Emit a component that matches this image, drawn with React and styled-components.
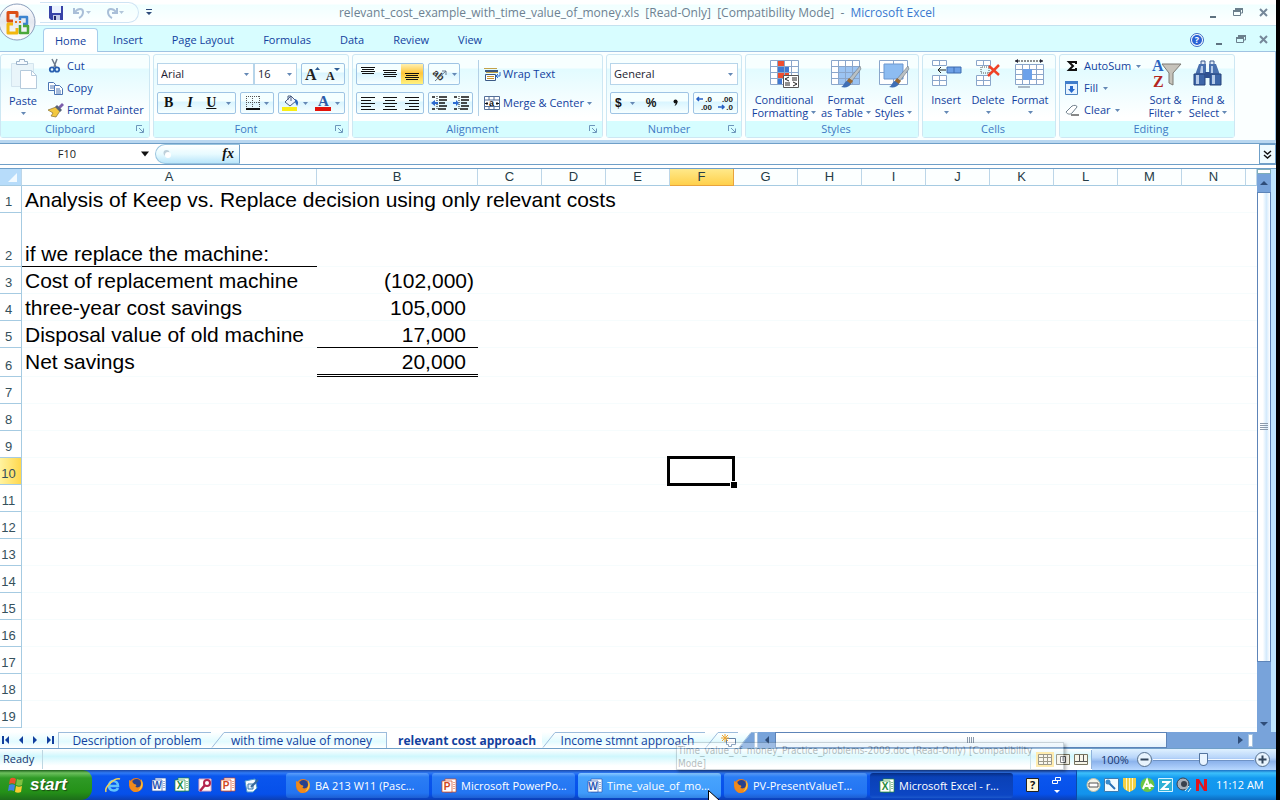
import styled, { createGlobalStyle, css } from 'styled-components';

const GlobalStyle = createGlobalStyle`
  * { box-sizing: border-box; }
  body {
    margin: 0;
    background: #000;
    overflow: hidden;
  }
  button, input, select {
    margin: 0;
    padding: 0;
    border: 0;
    background: none;
    font: inherit;
    color: inherit;
    outline: none;
  }
  svg { display: block; flex: none; overflow: visible; }
`;

const ink = '#123f9e';
const line = '#6f9fc8';

const Window = styled.div`
  display: flex;
  flex-direction: column;
  height: 100vh;
  margin-right: 4px;
  background: #fff;
  color: ${ink};
  font: 11px/14px 'Open Sans', 'Noto Sans', sans-serif;
  position: relative;
`;

/* ---------- title bar and tabs ---------- */

const TitleBar = styled.header`
  display: flex;
  align-items: center;
  height: 26px;
  padding-left: 40px;
  border-bottom: 1px solid #c4e2ef;
  background: linear-gradient(#fff 0 4px, #f0ffff 5px, #fff);
`;

const QuickAccess = styled.div`
  display: flex;
  align-items: center;
  gap: 4px;
  width: 99px;
  height: 21px;
  padding-left: 8px;
  border: 1px solid #cfe4f4;
  border-left: 0;
  border-radius: 0 11px 11px 0;
`;

const IconButton = styled.button`
  display: flex;
  align-items: center;
  justify-content: center;
  width: ${(props) => props.$width || 16}px;
  height: ${(props) => props.$height || 16}px;
`;

const Title = styled.h1`
  flex: 1;
  margin: 0;
  padding-right: 90px;
  text-align: center;
  font-size: 12px;
  font-weight: normal;
  line-height: 26px;
  white-space: pre;
  color: #6d8191;

  span { color: #3a78cf; }
`;

const WindowButtons = styled.div`
  display: flex;
  align-items: center;
  gap: ${(props) => props.$gap}px;
  padding-right: 5px;
`;

const OfficeButton = styled.button`
  position: absolute;
  left: -2px;
  top: 3px;
  z-index: 2;
`;

const TabBar = styled.nav`
  display: flex;
  align-items: stretch;
  gap: 1px;
  height: 26px;
  padding: 2px 0 0 43px;
  background: #d8fdff;
  border-bottom: 1px solid #9fc3e2;
`;

const Tab = styled.button`
  padding: 0 14px;
  margin-bottom: -1px;
  border-radius: 4px 4px 0 0;
  ${(props) =>
    props.$active &&
    css`
      padding: 0 11px;
      border: 1px solid #a6cdec;
      border-bottom: 0;
      background: #fff;
    `}
`;

const Spacer = styled.div`
  flex: 1;
`;

/* ---------- ribbon ---------- */

const Ribbon = styled.section`
  display: flex;
  gap: 3px;
  height: 91px;
  padding: 2px 0 2px;
  background: #fbffff;
  border-bottom: 3px solid #b9d7f0;
  border-right: 1px solid #9fc3e2;
`;

const Group = styled.div`
  display: flex;
  flex-direction: column;
  width: ${(props) => props.$width}px;
  border: 1px solid #cde7f3;
  border-radius: 3px;
  background: linear-gradient(#f7ffff 0 13px, #e2fbff 14px, #fff 62px);
`;

const GroupBody = styled.div`
  flex: 1;
  min-height: 0;
  display: flex;
  padding: 0 ${(props) => props.$pad || 3}px;
  gap: ${(props) => props.$gap || 0}px;
`;

const GroupLabel = styled.div`
  display: flex;
  flex: none;
  align-items: center;
  height: 16px;
  padding: 0 4px;
  background: #d6fdff;
  color: #3f79c4;

  span { flex: 1; text-align: center; padding-left: ${(props) => (props.$launcher ? 0 : 8)}px; }
`;

const Stack = styled.div`
  display: flex;
  flex-direction: column;
  gap: ${(props) => props.$gap || 0}px;
  padding-top: ${(props) => props.$top || 0}px;
`;

const ButtonRow = styled.div`
  display: flex;
  gap: ${(props) => props.$gap ?? 4}px;
`;

const ToolSet = styled.div`
  display: flex;
  align-items: center;
  justify-content: space-around;
  width: ${(props) => props.$width}px;
  height: 22px;
  border: 1px solid #9fc4e4;
  border-radius: 2px;
  background: linear-gradient(#f5ffff 0 8px, #d9f5ff 9px, #f7ffff);
`;

const Tool = styled.button`
  display: flex;
  align-items: center;
  justify-content: center;
  gap: 4px;
  flex: ${(props) => (props.$fit ? '0 0 auto' : '1')};
  height: 20px;
  padding: ${(props) => (props.$fit ? '0 4px' : '0')};
  color: #111;
  font: ${(props) => props.$font || "bold 14px/18px 'Liberation Serif', serif"};
  text-decoration: ${(props) => (props.$underline ? 'underline' : 'none')};
  ${(props) => props.$active && css`background: linear-gradient(#fff0b0, #ffc63a 45%, #fff27e);`}
`;

const Picker = styled.label`
  display: flex;
  align-items: center;
  width: ${(props) => props.$width}px;
  height: 22px;
  padding-right: 4px;
  border: 1px solid #b7d5ea;
  background: #fff;
  color: #1c1c30;
`;

const Select = styled.select`
  flex: 1;
  min-width: 0;
  height: 20px;
  padding-left: 3px;
  appearance: none;
`;

const SmallButton = styled.button`
  display: flex;
  align-items: center;
  gap: ${(props) => props.$gap || 3}px;
  height: 22px;
  white-space: nowrap;
`;

const BigButton = styled.button`
  display: flex;
  flex-direction: column;
  align-items: center;
  width: ${(props) => props.$width}px;
  padding-top: 4px;
  line-height: 13px;
  white-space: nowrap;

  svg + span { margin-top: 4px; }
`;

const LastLine = styled.span`
  display: flex;
  align-items: center;
  justify-content: center;
  gap: 3px;
  height: 13px;
`;

const Divider = styled.div`
  width: 1px;
  height: 56px;
  margin-top: 5px;
  background: #b3d0e6;
`;

/* ---------- formula bar ---------- */

const FormulaBar = styled.div`
  display: flex;
  height: 22px;
  border-top: 1px solid ${line};
  border-bottom: 1px solid ${line};
  color: #222;
`;

const NameBox = styled.label`
  display: flex;
  align-items: center;
  width: 155px;
  padding-right: 6px;

  input {
    flex: 1;
    min-width: 0;
    padding-right: 7px;
    text-align: center;
  }
`;

const FunctionArea = styled.div`
  display: flex;
  align-items: center;
  justify-content: space-between;
  width: 85px;
  padding: 0 1px 0 7px;
  border: 1px solid #9ac5df;
  border-right-color: ${line};
  border-radius: 10px 0 0 10px;
  background: linear-gradient(#fff, #e8fbff 50%, #b9e5fa);
`;

const FormulaInput = styled.input`
  flex: 1;
  min-width: 0;
`;

const ExpandButton = styled(IconButton)`
  height: auto;
  border: 1px solid ${line};
  background: #effbff;
`;

/* ---------- worksheet ---------- */

const Workspace = styled.main`
  display: flex;
  flex: 1;
  min-height: 0;
  margin-top: 3px;
  border-top: 1px solid ${line};
`;

const SheetArea = styled.div`
  flex: 1;
  min-width: 0;
  overflow: hidden;
`;

const Sheet = styled.table`
  width: 100%;
  table-layout: fixed;
  border-collapse: separate;
  border-spacing: 0;
  font-family: 'Liberation Sans', Arial, sans-serif;
  color: #000;
`;

const ColumnHead = styled.th`
  height: 17px;
  padding: 0;
  border-right: 1px solid #bcd6e8;
  border-bottom: 1px solid #a6cbe2;
  font-size: 13px;
  font-weight: normal;
  line-height: 16px;
  color: #263c46;
  background: #fcffff;
  ${(props) =>
    props.$active &&
    css`
      border-right-color: #e8a33d;
      border-bottom-color: #e8a33d;
      background: linear-gradient(#ffe98a, #ffd04b);
    `}
`;

const Corner = styled(ColumnHead)`
  background: #b7dcfa;

  svg { margin-left: auto; margin-right: 4px; }
`;

const RowHead = styled.th`
  padding: 0 4px 0 0;
  border-right: 1px solid #a6cbe2;
  border-bottom: 1px solid #a6cbe2;
  vertical-align: bottom;
  text-align: center;
  font-size: 13px;
  font-weight: normal;
  line-height: 20px;
  color: #35505c;
  ${(props) => props.$active && css`background: linear-gradient(90deg, #fff3a0, #ffd84e);`}
`;

const Cell = styled.td`
  position: relative;
  height: ${(props) => props.$height}px;
  padding: 0 ${(props) => (props.$negative ? 4 : 12)}px 0 3px;
  border-bottom: 1px solid #f6fcfd;
  vertical-align: bottom;
  text-align: ${(props) => (props.$number ? 'right' : 'left')};
  font-size: 21px;
  line-height: 24px;
  white-space: nowrap;
  ${(props) => props.$rule === 'single' && css`border-bottom: 1px solid #000;`}
  ${(props) => props.$rule === 'double' && css`border-bottom: 3px double #000;`}
  ${(props) => props.$rule === 'none' && css`padding-bottom: 2px;`}
`;

const Selection = styled.div`
  position: absolute;
  inset: -2px -1px -2px -3px;
  z-index: 1;
  border: 3px solid #000;

  &::after {
    content: '';
    position: absolute;
    right: -5px;
    bottom: -5px;
    width: 6px;
    height: 6px;
    border-top: 1px solid #fff;
    border-left: 1px solid #fff;
    background: #000;
  }
`;

const VScroll = styled.div`
  display: flex;
  flex-direction: column;
  align-items: stretch;
  width: 19px;
  padding-right: 5px;
  background: linear-gradient(90deg, #78a3da 14px, #bfe6ff 14px);
`;

const Splitter = styled.div`
  height: 5px;
  border: 1px solid #7faeb8;
  background: #fff;
`;

const VThumb = styled.div`
  display: flex;
  align-items: center;
  justify-content: center;
  flex: 1;
  border: 1px solid #5d84b8;
  background: linear-gradient(90deg, #fff 40%, #d4eafc 70%, #fff);
`;

const VTrack = styled.div`
  display: flex;
  align-items: flex-end;
  justify-content: center;
  height: 70px;
`;

/* ---------- sheet tabs ---------- */

const SheetBar = styled.div`
  display: flex;
  align-items: stretch;
  height: 17px;
  border-bottom: 1px solid ${line};
  background: linear-gradient(#fff, #e2fbff 60%, #fff);
  font-size: 12px;
`;

const SheetNav = styled.div`
  display: flex;
  align-items: center;
  width: 59px;
  border-right: 1px solid #a8c4dd;
`;

const SheetTab = styled.button`
  width: ${(props) => props.$width}px;
  padding-left: ${(props) => props.$before || 0}px;
  padding-right: ${(props) => props.$after || 0}px;
  border-top: 1px solid #9cbcdc;
  line-height: 15px;
  white-space: nowrap;
  ${(props) => props.$edge && css`border-right: 1px solid #9cbcdc;`}
  ${(props) =>
    props.$active &&
    css`
      border-top-color: #fff;
      background: #fff;
      font-weight: bold;
    `}
`;

const HScroll = styled.div`
  display: flex;
  align-items: center;
  flex: 1;
  padding-right: 5px;
  background: #78a3da;
`;

const HThumb = styled.div`
  display: flex;
  align-items: center;
  justify-content: center;
  align-self: stretch;
  flex: 1;
  margin-right: 71px;
  border: 1px solid #5d84b8;
  background: linear-gradient(#fff 30%, #e4f3fd);
`;

const Grip = styled.div`
  width: 5px;
  height: 13px;
  margin: 0 18px 0 5px;
  border: 1px solid #a6c3df;
  background: #fff;
`;

const TabGrip = styled(Grip)`
  height: 16px;
  width: 4px;
  margin: 0;
`;

/* ---------- status bar ---------- */

const StatusBar = styled.footer`
  display: flex;
  align-items: center;
  height: 21px;
  padding-left: 3px;
  background: linear-gradient(#fff, #cff7fd 35%, #fff 80%);
`;

const ReadyText = styled.span`
  width: 40px;
  height: 19px;
  line-height: 17px;
  color: #15366f;
  border-right: 1px solid #bdd7e2;
`;

const ViewButtons = styled.div`
  display: flex;
  align-items: center;
  width: 62px;
  border-left: 1px solid #bdd7e2;
  border-right: 1px solid #8fb2dc;
  height: 19px;
  padding-left: 5px;
`;

const ZoomArea = styled.div`
  display: flex;
  align-items: center;
  width: 184px;
  height: 21px;
  padding: 0 5px 0 9px;
  background: linear-gradient(#dff1ff, #b9d6fa 40%, #8cb3ec 60%, #b8d8ff);
  color: #15366f;
`;

const ZoomLabel = styled.span`
  width: 35px;
`;

const ZoomSlider = styled.input`
  flex: 1;
  min-width: 0;
  height: 15px;
  appearance: none;
  background: linear-gradient(transparent 7px, #f1f8ff 7px 8px, #6f93c6 8px 9px, transparent 9px);

  &::-webkit-slider-thumb {
    appearance: none;
    width: 9px;
    height: 13px;
    border: 1px solid #54759f;
    border-radius: 1px 1px 5px 5px;
    background: #e8f4ff;
  }
`;

/* ---------- taskbar ---------- */

const Taskbar = styled.div`
  display: flex;
  align-items: stretch;
  height: 30px;
  background: linear-gradient(#1a48a8 0, #2f7af5 3px, #0a56ee 6px, #0650ea 24px, #0c3fb4);
  color: #fff;
  font-size: 11px;
`;

const StartButton = styled.button`
  display: flex;
  align-items: center;
  gap: 5px;
  width: 92px;
  padding-left: 7px;
  border-radius: 0 9px 11px 0;
  background: linear-gradient(#1d5f1a 0, #6cc05d 3px, #2f9a26 8px, #249118 22px, #1d6d1a);
  font: italic bold 17px/24px 'Liberation Sans', Arial, sans-serif;
  text-shadow: 1px 1px 1px #1a4b12;
`;

const QuickLaunch = styled.div`
  display: flex;
  align-items: center;
  gap: 7px;
  width: 194px;
  padding-left: 13px;
`;

const Tasks = styled.div`
  display: flex;
  flex: 1;
  gap: 3px;
  padding: 3px 0 2px;
  min-width: 0;
`;

const Task = styled.button`
  position: relative;
  display: flex;
  align-items: center;
  gap: 4px;
  flex: 0 1 143px;
  min-width: 0;
  padding: 0 9px;
  border-radius: 3px;
  white-space: nowrap;
  background: linear-gradient(#5b9dfb, #2a7df5 4px, #2274f2 20px, #1d5ed2);
  ${(props) => props.$hover && css`background: linear-gradient(#8bc8ff, #47a3fd 4px, #3f9bfb 20px, #3384e4);`}
  ${(props) => props.$pressed && css`background: linear-gradient(#08308a, #0a41b6 4px, #0c46c4 22px, #1c58cb);`}
`;

const LanguageBar = styled.div`
  display: flex;
  align-items: center;
  gap: 12px;
  width: 52px;
  padding-left: 2px;
`;

const Tray = styled.div`
  display: flex;
  align-items: center;
  gap: 3px;
  width: 200px;
  padding-left: 9px;
  border-left: 1px solid #0b4aa8;
  background: linear-gradient(#1b6fc4 0, #3cc0fb 3px, #149af0 8px, #1393ec 24px, #0d6cc0);

  time { margin-left: 4px; white-space: nowrap; }
`;

const FadingTip = styled.div`
  position: absolute;
  left: 98px;
  bottom: 28px;
  z-index: 3;
  width: 388px;
  height: 28px;
  padding: 1px;
  border: 1px solid #62727d;
  box-shadow: 2px 2px 3px #000;
  background: #fff;
  color: #111;
  font: 10px/13px 'DejaVu Sans Condensed', 'DejaVu Sans', sans-serif;
  text-align: left;
  white-space: normal;
  opacity: 0.28;
`;

const Pointer = styled.div`
  position: absolute;
  left: 130px;
  top: 17px;
  z-index: 4;
`;

/* ---------- drawings ---------- */

const Arrow = ({ color = '#6488b5', size = 5 }) => (
  <svg width={size} height={size} viewBox="0 0 5 5">
    <path d="M0 1h5L2.5 4z" fill={color} />
  </svg>
);

const Launcher = () => (
  <svg width="8" height="8" viewBox="0 0 8 8" fill="none" stroke="#6d96bb">
    <path d="M.5 6V.5H6M3 3l4 4M7.500 3.500v4h-4" />
  </svg>
);

const OfficeLogo = () => (
  <svg width="38" height="38" viewBox="0 0 38 38">
    <defs>
      <linearGradient id="orb" x2="0" y2="1">
        <stop offset="0" stopColor="#fff" />
        <stop offset=".5" stopColor="#e4e8f0" />
        <stop offset="1" stopColor="#fff" />
      </linearGradient>
    </defs>
    <circle cx="19" cy="19" r="18" fill="url(#orb)" stroke="#8b9dbb" />
    <g fill="none" strokeWidth="3" strokeLinejoin="round">
      <path d="M15 18h-5V9.500h9v5" stroke="#dc4f17" />
      <path d="M22 17v-3h7v7h-4" stroke="#3c83cf" strokeWidth="2.500" />
      <path d="M15 21h-5v9h9v-5" stroke="#f2b70f" />
      <path d="M22 22v8h8v-7h-5" stroke="#4ba83a" strokeWidth="2.500" />
    </g>
    <path d="M17 18h2v2h-2zM21 18h2v2h-2z" fill="#e87422" />
  </svg>
);

const SaveIcon = () => (
  <svg width="14" height="14" viewBox="0 0 14 14">
    <path d="M0 0h14v14H2l-2-2z" fill="#3743a8" />
    <path d="M3 0h9v7H3z" fill="#e9f2ff" />
    <path d="M4 9h7v5H4z" fill="#c2cbe8" />
    <path d="M5 10h2v4H5z" fill="#22276b" />
  </svg>
);

const UndoIcon = ({ flip }) => (
  <svg width="14" height="12" viewBox="0 0 14 12" fill="none" stroke="#a9bfd8" strokeWidth="2">
    <g transform={flip ? 'matrix(-1 0 0 1 14 0)' : undefined}>
      <path d="M2 1v5h5M3 5c3-4 8-4 8 0 0 3-2 5-4 6" />
    </g>
  </svg>
);

const MinIcon = () => (
  <svg width="8" height="10" viewBox="0 0 8 10"><path d="M1 8h6v2H1z" fill="#5e7280" /></svg>
);

const RestoreIcon = () => (
  <svg width="10" height="9" viewBox="0 0 10 9" fill="none" stroke="#6b7f8c">
    <path d="M2.500 3V1h7v4H8M.5 3.500h7v4h-7z" /><path d="M0 3h8M2 1h8" strokeWidth="2" />
  </svg>
);

const CloseIcon = () => (
  <svg width="9" height="9" viewBox="0 0 9 9"><path d="M1 1l7 7M8 1L1 8" stroke="#75889a" strokeWidth="2" /></svg>
);

const HelpIcon = () => (
  <svg width="14" height="14" viewBox="0 0 14 14">
    <circle cx="7" cy="7" r="6.500" fill="#fff" stroke="#3b6bc4" />
    <circle cx="7" cy="7" r="5" fill="#2a62d4" />
    <text x="7" y="10" fontSize="9" fontWeight="bold" textAnchor="middle" fill="#fff">?</text>
  </svg>
);

const PasteIcon = () => (
  <svg width="29" height="31" viewBox="0 0 29 31" stroke="#b5cadc">
    <path d="M2.500 4.500h22v23h-22z" fill="#e9f5fa" stroke="#d3e4ee" />
    <path d="M7.500 5.500v-3h3v-2h5v2h3v3z" fill="#f6fbff" stroke="#9db4cb" />
    <path d="M11.500 11.500h11l5 5v13h-16z" fill="#fff" />
    <path d="M22.500 11.500v5h5" fill="none" />
  </svg>
);

const CutIcon = () => (
  <svg width="14" height="14" viewBox="0 0 14 14" fill="none">
    <path d="M4 0l4 8M9 0L6 8" stroke="#6d7c8d" strokeWidth="1.500" />
    <circle cx="4" cy="10.500" r="2.200" stroke="#285fb0" strokeWidth="1.800" />
    <circle cx="9" cy="10.500" r="2.200" stroke="#285fb0" strokeWidth="1.800" />
  </svg>
);

const CopyIcon = () => (
  <svg width="16" height="14" viewBox="0 0 16 14" fill="#fff" stroke="#4b75b4">
    <path d="M.5 1.500h5l2 2v6h-7zM2 5h4M2 7h4" />
    <path d="M6.500 4.500h5l3 3v6h-8zM8 8h4M8 10h5M8 12h5" />
  </svg>
);

const BrushIcon = () => (
  <svg width="16" height="14" viewBox="0 0 16 14">
    <path d="M14 0l-4 4 2 2 4-4z" fill="#7b5dab" />
    <path d="M0 7l8-3 4 4-4 6-5-1 2-3z" fill="#f3c83f" stroke="#8a7030" strokeWidth=".7" />
    <path d="M7 4l5 5 2-2-5-5z" fill="#586378" />
  </svg>
);

const GrowIcon = ({ small }) => (
  <svg width="15" height="16" viewBox="0 0 15 16">
    <text x="0" y="14" fontSize={small ? 12 : 16} fontWeight="bold" fontFamily="Liberation Serif" fill="#222">A</text>
    <path d={small ? 'M8 2h6l-3 3z' : 'M10 4h5l-2.500-3z'} fill="#2e5d94" />
  </svg>
);

const BorderIcon = () => (
  <svg width="14" height="14" viewBox="0 0 14 14" fill="none" stroke="#555">
    <path d="M0 .5h14M0 6.500h14M.5 0v12M6.500 0v12M13.500 0v12" strokeDasharray="1 1" />
    <path d="M0 13h14" stroke="#111" strokeWidth="2" />
  </svg>
);

const FillColorIcon = () => (
  <svg width="17" height="16" viewBox="0 0 17 16">
    <path d="M3 7l6-6 5 5-6 5z" fill="#eef4ff" stroke="#4a5e83" />
    <path d="M6 5V1h3v5" fill="none" stroke="#4a5e83" />
    <path d="M13 4c3 1 4 4 2 7l-2-4z" fill="#2d67bb" />
    <path d="M0 12h15v4H0z" fill="#f9ee14" />
  </svg>
);

const FontColorIcon = () => (
  <svg width="16" height="16" viewBox="0 0 16 16">
    <text x="3" y="11" fontSize="15" fontWeight="bold" fontFamily="Liberation Serif" fill="#2c5ca8">A</text>
    <path d="M0 12h16v4H0z" fill="#e3120b" />
  </svg>
);

const LinesIcon = ({ align = 'center' }) => (
  <svg width="14" height="14" viewBox="0 0 14 14">
    {[14, 10, 14, 10, 14].map((w, i) => {
      const x = align === 'left' ? 0 : align === 'right' ? 14 - w : (14 - w) / 2;
      return <rect key={i} x={x} y={1 + i * 3} width={w} height="1" fill="#111" />;
    })}
  </svg>
);

const VAlignIcon = ({ top }) => (
  <svg width="14" height="16" viewBox="0 0 14 16">
    <path d={`M0 ${top}h14M1 ${top + 2}h12M0 ${top + 4}h14M1 ${top + 6}h12`} stroke="#111" />
  </svg>
);

const OrientationIcon = () => (
  <svg width="17" height="16" viewBox="0 0 17 16">
    <text x="1" y="10" fontSize="10" fontWeight="bold" transform="rotate(40 4 9)" fontFamily="Liberation Sans" fill="#333">ab</text>
    <path d="M4 15L15 5M15 9V5h-4" stroke="#66788c" fill="none" />
  </svg>
);

const IndentIcon = ({ out }) => (
  <svg width="17" height="14" viewBox="0 0 17 14">
    <path d="M1 1h3M8 1h8M8 4h8M8 7h6M8 10h8M1 13h3M7 13h8" stroke="#111" strokeWidth="1.500" />
    <path d="M6 0v14" stroke="#111" strokeDasharray="1 1" />
    <path d={out ? 'M0 7l4-3v2h3v2H4v2z' : 'M6 7L3 4v2H0v2h3v2z'} fill="#2d6bd0" />
  </svg>
);

const WrapIcon = () => (
  <svg width="17" height="15" viewBox="0 0 17 15">
    <path d="M0 1.500h13M2 5.500h12" stroke="#c3a24a" />
    <path d="M1 3h13v2H1z" fill="#3c587e" />
    <path d="M1.500 7.500h10v6h-10z" fill="#fff" stroke="#3b5a86" />
    <path d="M3 9.500h7M3 11.500h7" stroke="#c3912b" />
    <path d="M16 5v4h-3M14 7l-2 2 2 2" fill="none" stroke="#2d6bd0" />
  </svg>
);

const MergeIcon = () => (
  <svg width="16" height="15" viewBox="0 0 16 15">
    <path d="M.5.5h15v13H.5zM5 .5V4M10 .5V4M5 11v3M10 11v3M0 4h16M0 10.500h16" fill="#fff" stroke="#536f98" />
    <path d="M1 7.500h3M12 7.500h3M3 6v3M13 6v3" stroke="#111" />
    <text x="5" y="10" fontSize="9" fontWeight="bold" fontFamily="Liberation Sans" fill="#111">a</text>
  </svg>
);

const DecimalIcon = ({ less }) => (
  <svg width="18" height="16" viewBox="0 0 18 16">
    <g fontSize="8" fontWeight="bold" fontFamily="Liberation Sans" fill="#222" textAnchor="end">
      <text x="16" y="7">{less ? '.00' : '.0'}</text>
      <text x="16" y="15">{less ? '.0' : '.00'}</text>
    </g>
    <path d={less ? 'M1 12h6M5 10l2 2-2 2' : 'M1 4h6M3 2L1 4l2 2'} fill="none" stroke="#2660c5" strokeWidth="1.500" />
  </svg>
);

const Grid = ({ x = 0, y = 0, cols = 4, rows = 4, w = 7, h = 6 }) => (
  <path
    d={[
      ...Array.from({ length: cols + 1 }, (_, i) => `M${x + i * w} ${y}v${rows * h}`),
      ...Array.from({ length: rows + 1 }, (_, i) => `M${x} ${y + i * h}h${cols * w}`),
    ].join('')}
    stroke="#8aa6cb"
    fill="none"
  />
);

const PaintBrush = () => (
  <g>
    <path d="M30 7L19 20l3 2 9-12z" fill="#b9c0c4" stroke="#5f6b74" strokeWidth=".5" />
    <path d="M19 19l4 3-3 4-4-3z" fill="#9b6b35" />
    <path d="M17 22l4 3c-2 3-5 4-10 3 3-1 3-5 6-6z" fill="#3f6fb5" />
  </g>
);

const ConditionalIcon = () => (
  <svg width="32" height="30" viewBox="0 0 32 30">
    <path d="M2 1h27v24H2z" fill="#fff" />
    <path d="M9 1h7v6H9zM9 13h12v6H9z" fill="#ee4d2f" />
    <path d="M9 7h12v6H9zM9 19h5v6H9z" fill="#3e78d2" />
    <Grid x={2.5} y={1.5} />
    <path d="M15.500 16.500h15v12h-15z" fill="#fff" stroke="#555" />
    <path d="M21 18l-4 2 4 2M24 19h5M24 21h5M17 24h5M17 26h5M25 23l4 2-4 2" fill="none" stroke="#222" />
  </svg>
);

const FormatTableIcon = () => (
  <svg width="32" height="30" viewBox="0 0 32 30">
    <path d="M1 1h28v24H1z" fill="#fff" />
    <path d="M8 7h21v18H8z" fill="#9cc4f2" />
    <Grid x={1.5} y={1.5} />
    <PaintBrush />
  </svg>
);

const CellStylesIcon = () => (
  <svg width="32" height="30" viewBox="0 0 32 30">
    <path d="M1 1h28v24H1z" fill="#fff" />
    <Grid x={1.5} y={1.5} cols={2} rows={2} w={14} h={12} />
    <path d="M6 5h19v15H6z" fill="#8dbcf1" stroke="#6d97cf" />
    <PaintBrush />
  </svg>
);

const InsertIcon = () => (
  <svg width="32" height="30" viewBox="0 0 32 30">
    <path d="M2 1h14v5H2zM2 16h14v10H2z" fill="#fff" />
    <Grid x={2.5} y={1.5} cols={2} rows={1} h={5} />
    <Grid x={2.5} y={16.5} cols={2} rows={2} h={5} />
    <path d="M17 8h14v6H17z" fill="#6da0e6" stroke="#3e6cb0" />
    <path d="M24 8v6" stroke="#3e6cb0" />
    <path d="M8 11h8M11 8l-3 3 3 3" stroke="#222" fill="none" />
  </svg>
);

const DeleteIcon = () => (
  <svg width="28" height="30" viewBox="0 0 28 30">
    <path d="M2 1h14v5H2zM2 16h14v10H2z" fill="#fff" />
    <Grid x={2.5} y={1.5} cols={2} rows={1} h={5} />
    <Grid x={2.5} y={16.5} cols={2} rows={2} h={5} />
    <path d="M7 8v6h8V8z" fill="none" stroke="#555" strokeDasharray="1 1" />
    <path d="M15 7l10 9M25 6L14 17" stroke="#ef4327" strokeWidth="2.500" />
  </svg>
);

const FormatIcon = () => (
  <svg width="32" height="30" viewBox="0 0 32 30">
    <path d="M1 5h28v21H1z" fill="#fff" />
    <Grid x={1.5} y={5.5} cols={4} rows={4} h={5} />
    <path d="M9 10h9v11H9z" fill="#6ca1ea" />
    <path d="M1 2h28" stroke="#222" strokeDasharray="2 1" />
    <path d="M4 0L1 2l3 2zM26 0l3 2-3 2z" fill="#223" />
    <path d="M4 27h12v2H4z" fill="#aab9c6" />
  </svg>
);

const FillIcon = () => (
  <svg width="14" height="15" viewBox="0 0 14 15">
    <path d="M.5.5h12v13H.5z" fill="#e6f3ff" stroke="#4a80c0" />
    <path d="M0 0h13v3H0z" fill="#3f7dcb" />
    <path d="M5 5h3v3h2l-3.500 4L3 8h2z" fill="#2769cc" />
  </svg>
);

const ClearIcon = () => (
  <svg width="15" height="12" viewBox="0 0 15 12">
    <path d="M1 8l6-6c2-1 5-1 5 1L7 9c-2 2-5 1-6-1z" fill="#fff" stroke="#6f7f8c" />
    <path d="M6 11h8" stroke="#111" />
  </svg>
);

const SortIcon = () => (
  <svg width="32" height="30" viewBox="0 0 32 30">
    <path d="M12 5h19l-8 9v12l-4-2V14z" fill="#c6c3bb" stroke="#7d7b75" />
    <g fontWeight="bold" fontFamily="Liberation Serif" fontSize="16">
      <text x="2" y="12" fill="#2a65c0">A</text>
      <text x="3" y="28" fill="#b3261f">Z</text>
    </g>
  </svg>
);

const FindIcon = () => (
  <svg width="30" height="30" viewBox="0 0 30 30">
    <path d="M8 2h4v4H8zM17 2h4v4h-4z" fill="#dfe9f6" stroke="#3c5b8e" />
    <path d="M6 5h7v8h3V5h7l4 11H2z" fill="#4a71af" />
    <path d="M1 15h11v11H1zM17 15h11v11H17z" fill="#3d66a8" stroke="#24427a" />
    <path d="M3 16h3v9H3zM19 16h3v9h-3zM8 7h2v7H7zM18 7h2v7h-2z" fill="#b6cbe8" />
    <path d="M12 13h5v6h-5z" fill="#2f5190" />
  </svg>
);

const NavIcon = ({ dir, bar }) => (
  <svg width="14" height="8" viewBox="0 0 14 8" fill="#123f9e">
    <path d={dir === 'left' ? 'M9 0v8L5 4z' : 'M5 0v8l4-4z'} />
    {bar && <path d={dir === 'left' ? 'M2 0h2v8H2z' : 'M10 0h2v8h-2z'} />}
  </svg>
);

const Slash = ({ fill = 'none' }) => (
  <svg width="16" height="16" viewBox="0 0 16 16">
    <path d="M1 16L13 1h3v15z" fill={fill} />
    <path d="M1 15.500L13 .5h3" fill="none" stroke="#9cbcdc" />
  </svg>
);

const NewSheetIcon = () => (
  <svg width="17" height="13" viewBox="0 0 17 13">
    <path d="M5.500 4.500h9v6h-4v2h-3v-2h-2z" fill="#fff" stroke="#6282a8" />
    <path d="M4 0v8M0 4h8M1 1l6 6M7 1L1 7" stroke="#efa52c" />
  </svg>
);

const ViewIcon = ({ kind }) => (
  <svg width="18" height="15" viewBox="0 0 18 15">
    {kind === 'grid' && <path d="M0 0h18v15H0z" fill="#ffe591" />}
    <path d="M2.500 2.500h13v10h-13z" fill="#f7f5e8" stroke="#77735e" />
    {kind === 'grid' && <path d="M3 5.500h12M3 9.500h12M7.500 3v9M11.500 3v9" stroke="#77735e" />}
    {kind === 'page' && <path d="M6.500 4.500h5v6h-5zM8 6h2M8 8h2" fill="#fff" stroke="#555" />}
    {kind === 'break' && <path d="M3 9.500h12M7.500 3v6M11.500 3v6" stroke="#555" />}
  </svg>
);

const RoundIcon = ({ plus }) => (
  <svg width="17" height="17" viewBox="0 0 17 17">
    <circle cx="8.500" cy="8.500" r="7" fill="#e7f3fd" stroke="#56718f" />
    <path d={plus ? 'M4.500 8.500h8M8.500 4.500v8' : 'M4.500 8.500h8'} stroke="#33465c" strokeWidth="2" />
  </svg>
);

const FlagIcon = () => (
  <svg width="18" height="18" viewBox="0 0 18 18">
    <path d="M3 3c2-2 4-1 6 0L8 8C6 7 4 7 2 8z" fill="#e8532b" />
    <path d="M10 3c2 1 4 1 6 0l-1 6c-2 1-4 1-6 0z" fill="#7fc141" />
    <path d="M2 9c2-1 4-1 6 0l-1 6c-2-1-4-1-6 0z" fill="#3f83e0" />
    <path d="M9 10c2 1 4 1 6 0l-1 6c-2 1-4 1-6 0z" fill="#f9cc30" />
  </svg>
);

const IeIcon = () => (
  <svg width="16" height="16" viewBox="0 0 16 16" fill="none">
    <path d="M13 11c-2 4-9 3-9-2 0-7 9-6 9 0H4" stroke="#62c3fb" strokeWidth="2.500" />
    <path d="M1 15C-1 10 10 0 15 2" stroke="#f0cf59" strokeWidth="1.500" />
  </svg>
);

const FirefoxIcon = () => (
  <svg width="16" height="16" viewBox="0 0 16 16">
    <circle cx="8" cy="8" r="7" fill="#ed7a1a" />
    <circle cx="8.500" cy="6.500" r="4.500" fill="#27418d" />
    <path d="M1 3c2 1 4 2 5 4 2 0 3 1 2 2-2 1 3 3 6-1 0 5-4 7-7 7S1 11 1 3z" fill="#f08a1c" />
    <path d="M13 2c3 4 2 10-3 12 3-4 4-7 3-12z" fill="#fbc53c" />
  </svg>
);

const AppIcon = ({ letter, color }) => (
  <svg width="16" height="16" viewBox="0 0 16 16">
    <path d="M4 1h11v13H4z" fill="#fff" stroke={color} strokeWidth=".7" />
    <path d="M13 4v8" stroke={color} strokeDasharray="1 1" />
    <path d="M1 3h10v11H1z" fill="#fff" stroke={color} strokeWidth=".7" />
    <text x="6" y="12" fontSize="10" fontWeight="bold" textAnchor="middle" fontFamily="Liberation Sans" fill={color}>{letter}</text>
  </svg>
);

const KeyIcon = () => (
  <svg width="16" height="16" viewBox="0 0 16 16">
    <path d="M2 2h12v12H2z" fill="#fff" stroke="#e4a9bd" />
    <circle cx="10" cy="6" r="3" fill="#fff" stroke="#b3264f" strokeWidth="2" />
    <path d="M8 8l-5 6" stroke="#b3264f" strokeWidth="2.500" />
  </svg>
);

const DesktopIcon = () => (
  <svg width="16" height="16" viewBox="0 0 16 16">
    <path d="M2 4l10-2 2 9-4 4H4z" fill="#f5fbff" stroke="#4b97c8" />
    <path d="M5 7h5v5H5z" fill="#dff1fd" stroke="#3577a8" />
    <path d="M15 3L8 10" stroke="#37699a" strokeWidth="2" />
  </svg>
);

const TrayIcons = () => (
  <>
    <svg width="15" height="16" viewBox="0 0 15 16">
      <circle cx="7.500" cy="8" r="6.500" fill="#f4f4e8" stroke="#c7c3a8" />
      <path d="M3 6h9v4H3z" fill="#fff" stroke="#555" />
    </svg>
    <svg width="15" height="16" viewBox="0 0 15 16">
      <path d="M.5 1.500h14v13H.5z" fill="#f2fbff" stroke="#3d7cae" />
      <path d="M4 5l7 7" stroke="#2870b5" strokeWidth="2" />
      <circle cx="4" cy="5" r="2.500" fill="#3a8bcb" />
    </svg>
    <svg width="15" height="16" viewBox="0 0 15 16">
      <path d="M1 1h13v8c0 3-4 5-6.500 6C5 14 1 12 1 9z" fill="#f3d046" />
      <path d="M4.500 1v12M7.500 1v14M10.500 1v12" stroke="#fff6c8" />
    </svg>
    <svg width="15" height="16" viewBox="0 0 15 16">
      <circle cx="7.500" cy="8" r="7" fill="#6cc644" />
      <path d="M3 12l4-9 3 9M4 9h8l-2-2" fill="none" stroke="#fff" strokeWidth="2" />
    </svg>
    <svg width="15" height="16" viewBox="0 0 15 16">
      <path d="M.5 1.500h14v13H.5z" fill="#2fb0d6" stroke="#d4f3ff" />
      <path d="M4 5h7l-7 7h7" fill="none" stroke="#fff" strokeWidth="2" />
    </svg>
    <svg width="15" height="16" viewBox="0 0 15 16">
      <circle cx="7" cy="7" r="6" fill="#a8b0ba" stroke="#39424e" />
      <circle cx="8" cy="7" r="3" fill="#39424e" />
      <path d="M9 14l4-5M12 15l3-4" stroke="#dff" />
    </svg>
    <svg width="15" height="16" viewBox="0 0 15 16">
      <path d="M2 14V2h3l5 8V2h3v12h-3L5 6v8z" fill="#e3131d" />
    </svg>
  </>
);

/* ---------- page ---------- */

const columns = ['A', 'B', 'C', 'D', 'E', 'F', 'G', 'H', 'I', 'J', 'K', 'L', 'M', 'N', ''];
const columnWidths = { A: 295, B: 161 };
const rowHeights = { 2: 54, 6: 29 };

const cells = {
  A1: { text: 'Analysis of Keep vs. Replace decision using only relevant costs' },
  A2: { text: 'if we replace the machine:', rule: 'single' },
  A3: { text: 'Cost of replacement machine' },
  B3: { text: '(102,000)', number: true, negative: true },
  A4: { text: 'three-year cost savings' },
  B4: { text: '105,000', number: true },
  A5: { text: 'Disposal value of old machine' },
  B5: { text: '17,000', number: true, rule: 'single' },
  A6: { text: 'Net savings', rule: 'none' },
  B6: { text: '20,000', number: true, rule: 'double' },
};

const RibbonGroup = ({ name, width, launcher, children, ...body }) => (
  <Group $width={width}>
    <GroupBody {...body}>{children}</GroupBody>
    <GroupLabel $launcher={launcher}>
      <span>{name}</span>
      {launcher && (
        <IconButton $width={10} $height={10} aria-label={`${name} options`}><Launcher /></IconButton>
      )}
    </GroupLabel>
  </Group>
);

const Big = ({ icon, width, first, second }) => (
  <BigButton $width={width}>
    {icon}
    <span>{first}</span>
    <LastLine>{second}<Arrow /></LastLine>
  </BigButton>
);

const RibbonPanel = () => (
  <Ribbon>
    <RibbonGroup name="Clipboard" width={150} launcher $gap={6}>
      <Big width={38} icon={<PasteIcon />} first="Paste" />
      <Stack>
        <SmallButton $gap={5}><CutIcon />Cut</SmallButton>
        <SmallButton><CopyIcon />Copy</SmallButton>
        <SmallButton><BrushIcon />Format Painter</SmallButton>
      </Stack>
    </RibbonGroup>

    <RibbonGroup name="Font" width={196} launcher>
      <Stack $top={8} $gap={7}>
        <ButtonRow>
          <ButtonRow $gap={0}>
            <Picker $width={97}>
              <Select aria-label="Font"><option>Arial</option></Select>
              <Arrow />
            </Picker>
            <Picker $width={43}>
              <Select aria-label="Font size"><option>16</option></Select>
              <Arrow />
            </Picker>
          </ButtonRow>
          <ToolSet $width={44}>
            <Tool aria-label="Grow font"><GrowIcon /></Tool>
            <Tool aria-label="Shrink font"><GrowIcon small /></Tool>
          </ToolSet>
        </ButtonRow>
        <ButtonRow>
          <ToolSet $width={79}>
            <Tool>B</Tool>
            <Tool $font="italic bold 14px/18px 'Liberation Serif', serif">I</Tool>
            <Tool $underline>U</Tool>
            <Tool $fit aria-label="Underline styles"><Arrow /></Tool>
          </ToolSet>
          <ToolSet $width={34}>
            <Tool aria-label="Borders"><BorderIcon /><Arrow /></Tool>
          </ToolSet>
          <ToolSet $width={67}>
            <Tool aria-label="Fill color"><FillColorIcon /><Arrow /></Tool>
            <Tool aria-label="Font color"><FontColorIcon /><Arrow /></Tool>
          </ToolSet>
        </ButtonRow>
      </Stack>
    </RibbonGroup>

    <RibbonGroup name="Alignment" width={251} launcher $gap={5}>
      <Stack $top={8} $gap={7}>
        <ButtonRow>
          <ToolSet $width={68}>
            <Tool aria-label="Top align"><VAlignIcon top={1.5} /></Tool>
            <Tool aria-label="Middle align"><VAlignIcon top={4.5} /></Tool>
            <Tool $active aria-label="Bottom align"><VAlignIcon top={7.5} /></Tool>
          </ToolSet>
          <ToolSet $width={32}>
            <Tool aria-label="Orientation"><OrientationIcon /><Arrow /></Tool>
          </ToolSet>
        </ButtonRow>
        <ButtonRow>
          <ToolSet $width={68}>
            <Tool aria-label="Align left"><LinesIcon align="left" /></Tool>
            <Tool aria-label="Center"><LinesIcon /></Tool>
            <Tool aria-label="Align right"><LinesIcon align="right" /></Tool>
          </ToolSet>
          <ToolSet $width={45}>
            <Tool aria-label="Decrease indent"><IndentIcon out /></Tool>
            <Tool aria-label="Increase indent"><IndentIcon /></Tool>
          </ToolSet>
        </ButtonRow>
      </Stack>
      <Divider />
      <Stack $top={8} $gap={7}>
        <SmallButton $gap={2}><WrapIcon />Wrap Text</SmallButton>
        <SmallButton><MergeIcon />Merge &amp; Center <Arrow /></SmallButton>
      </Stack>
    </RibbonGroup>

    <RibbonGroup name="Number" width={136} launcher>
      <Stack $top={8} $gap={7}>
        <Picker $width={128}>
          <Select aria-label="Number format"><option>General</option></Select>
          <Arrow />
        </Picker>
        <ButtonRow>
          <ToolSet $width={79}>
            <Tool $fit $font="bold 12px/18px 'Liberation Sans', sans-serif">$</Tool>
            <Tool $fit aria-label="Currency formats"><Arrow /></Tool>
            <Tool $font="bold 12px/18px 'Liberation Sans', sans-serif">%</Tool>
            <Tool $font="bold 20px/6px 'Liberation Serif', serif" aria-label="Comma style">
              <svg width="5" height="8" viewBox="0 0 5 8">
                <circle cx="2.500" cy="2.500" r="2" fill="#111" /><path d="M4.500 2c0 3-1 4-3 5l2-4z" fill="#111" />
              </svg>
            </Tool>
          </ToolSet>
          <ToolSet $width={45}>
            <Tool aria-label="Increase decimal"><DecimalIcon /></Tool>
            <Tool aria-label="Decrease decimal"><DecimalIcon less /></Tool>
          </ToolSet>
        </ButtonRow>
      </Stack>
    </RibbonGroup>

    <RibbonGroup name="Styles" width={174} $pad={2}>
      <Big width={72} icon={<ConditionalIcon />} first="Conditional" second="Formatting" />
      <Big width={52} icon={<FormatTableIcon />} first="Format" second="as Table" />
      <Big width={43} icon={<CellStylesIcon />} first="Cell" second="Styles" />
    </RibbonGroup>

    <RibbonGroup name="Cells" width={134} $pad={2}>
      <Big width={42} icon={<InsertIcon />} first="Insert" />
      <Big width={42} icon={<DeleteIcon />} first="Delete" />
      <Big width={42} icon={<FormatIcon />} first="Format" />
    </RibbonGroup>

    <RibbonGroup name="Editing" width={176} $pad={5}>
      <Stack>
        <SmallButton $gap={5}>
          <svg width="14" height="12" viewBox="0 0 14 12">
            <path d="M11 4V2H4l4 4-4 4h7V8" fill="none" stroke="#111" strokeWidth="2" />
          </svg>
          AutoSum <Arrow />
        </SmallButton>
        <SmallButton $gap={5}><FillIcon />Fill <Arrow /></SmallButton>
        <SmallButton $gap={4}><ClearIcon />Clear <Arrow /></SmallButton>
      </Stack>
      <Spacer />
      <Big width={43} icon={<SortIcon />} first="Sort &" second="Filter" />
      <Big width={42} icon={<FindIcon />} first="Find &" second="Select" />
    </RibbonGroup>
  </Ribbon>
);

const Worksheet = () => (
  <Workspace>
    <SheetArea>
      <Sheet>
        <colgroup>
          <col style={{ width: 22 }} />
          {columns.map((name) => (
            <col key={name} style={{ width: name ? columnWidths[name] || 64 : 'auto' }} />
          ))}
        </colgroup>
        <thead>
          <tr>
            <Corner>
              <svg width="9" height="9" viewBox="0 0 9 9"><path d="M9 0v9H0z" fill="#f2faff" /></svg>
            </Corner>
            {columns.map((name) => (
              <ColumnHead key={name} $active={name === 'F'}>{name}</ColumnHead>
            ))}
          </tr>
        </thead>
        <tbody>
          {Array.from({ length: 19 }, (_, i) => i + 1).map((row) => (
            <tr key={row}>
              <RowHead $active={row === 10}>{row}</RowHead>
              {columns.map((name) => {
                const cell = cells[name + row] || {};
                return (
                  <Cell
                    key={name}
                    $height={rowHeights[row] || 27}
                    $number={cell.number}
                    $negative={cell.negative}
                    $rule={cell.rule}
                  >
                    {cell.text}
                    {name + row === 'F10' && <Selection />}
                  </Cell>
                );
              })}
            </tr>
          ))}
        </tbody>
      </Sheet>
    </SheetArea>
    <VScroll>
      <Splitter />
      <IconButton $width={14} $height={18} aria-label="Scroll up">
        <svg width="8" height="4" viewBox="0 0 8 4"><path d="M0 4h8L4 0z" fill="#2f4d79" /></svg>
      </IconButton>
      <VThumb>
        <svg width="8" height="8" viewBox="0 0 8 8"><path d="M0 .5h8M0 2.500h8M0 4.500h8M0 6.500h8" stroke="#8b9aab" /></svg>
      </VThumb>
      <VTrack>
        <IconButton $width={14} aria-label="Scroll down">
          <svg width="8" height="4" viewBox="0 0 8 4"><path d="M0 0h8L4 4z" fill="#2f4d79" /></svg>
        </IconButton>
      </VTrack>
    </VScroll>
  </Workspace>
);

const App = () => (
  <>
    <GlobalStyle />
    <Window>
      <OfficeButton aria-label="Office"><OfficeLogo /></OfficeButton>
      <TitleBar>
        <QuickAccess>
          <IconButton aria-label="Save"><SaveIcon /></IconButton>
          <IconButton $width={26} aria-label="Undo"><UndoIcon /><Arrow color="#b3c6da" /></IconButton>
          <IconButton $width={32} aria-label="Redo"><UndoIcon flip /><Arrow color="#b3c6da" /></IconButton>
        </QuickAccess>
        <IconButton $width={20} aria-label="Customize toolbar">
          <svg width="6" height="7" viewBox="0 0 6 7" fill="#2d4b7b"><path d="M0 0h6v1H0zM0 3h6L3 6z" /></svg>
        </IconButton>
        <Title>
          {'relevant_cost_example_with_time_value_of_money.xls  [Read-Only]  [Compatibility Mode]  -  '}
          <span>Microsoft Excel</span>
        </Title>
        <WindowButtons $gap={9}>
          <IconButton aria-label="Minimize"><MinIcon /></IconButton>
          <IconButton aria-label="Restore"><RestoreIcon /></IconButton>
          <IconButton aria-label="Close"><CloseIcon /></IconButton>
        </WindowButtons>
      </TitleBar>
      <TabBar>
        <Tab $active>Home</Tab>
        {['Insert', 'Page Layout', 'Formulas', 'Data', 'Review', 'View'].map((name) => (
          <Tab key={name}>{name}</Tab>
        ))}
        <Spacer />
        <WindowButtons $gap={6}>
          <IconButton aria-label="Help"><HelpIcon /></IconButton>
          <IconButton aria-label="Minimize workbook"><MinIcon /></IconButton>
          <IconButton aria-label="Restore workbook"><RestoreIcon /></IconButton>
          <IconButton aria-label="Close workbook"><CloseIcon /></IconButton>
        </WindowButtons>
      </TabBar>
      <RibbonPanel />
      <FormulaBar>
        <NameBox>
          <input aria-label="Name box" defaultValue="F10" />
          <Arrow color="#111" size={8} />
        </NameBox>
        <FunctionArea>
          <svg width="8" height="10" viewBox="0 0 8 10">
            <circle cx="3.500" cy="4" r="3" fill="#bed0da" /><circle cx="5" cy="6" r="3" fill="#fff" />
          </svg>
          <Tool $fit $font="italic bold 14px/18px 'Liberation Serif', serif">fx</Tool>
        </FunctionArea>
        <FormulaInput aria-label="Formula" />
        <ExpandButton $width={17} aria-label="Expand formula bar">
          <svg width="7" height="9" viewBox="0 0 7 9" fill="none" stroke="#111" strokeWidth="1.500"><path d="M0 1l3.500 3L7 1M0 5l3.500 3L7 5" /></svg>
        </ExpandButton>
      </FormulaBar>

      <Worksheet />

      <SheetBar>
        <SheetNav>
          <NavIcon dir="left" bar />
          <NavIcon dir="left" />
          <NavIcon dir="right" />
          <NavIcon dir="right" bar />
        </SheetNav>
        <SheetTab $width={152} $before={4}>Description of problem</SheetTab>
        <Slash />
        <SheetTab $width={160} $after={10} $edge>with time value of money</SheetTab>
        <SheetTab $width={155} $before={5} $active>relevant cost approach</SheetTab>
        <Slash />
        <SheetTab $width={147} $after={8}>Income stmnt approach</SheetTab>
        <Slash />
        <SheetTab $width={17} aria-label="Insert worksheet"><NewSheetIcon /></SheetTab>
        <Slash fill="#78a3da" />
        <TabGrip />
        <HScroll>
          <IconButton $width={17} aria-label="Scroll left">
            <svg width="4" height="8" viewBox="0 0 4 8"><path d="M4 0v8L0 4z" fill="#2f4d79" /></svg>
          </IconButton>
          <HThumb>
            <svg width="8" height="6" viewBox="0 0 8 6"><path d="M.5 0v6M2.500 0v6M4.500 0v6M6.500 0v6" stroke="#8b9aab" /></svg>
          </HThumb>
          <svg width="5" height="8" viewBox="0 0 5 8"><path d="M0 0v8l5-4z" fill="#2f4d79" /></svg>
          <Grip />
        </HScroll>
      </SheetBar>

      <StatusBar>
        <ReadyText>Ready</ReadyText>
        <Spacer />
        <ViewButtons>
          <IconButton $width={18} aria-label="Normal"><ViewIcon kind="grid" /></IconButton>
          <IconButton $width={18} aria-label="Page layout"><ViewIcon kind="page" /></IconButton>
          <IconButton $width={18} aria-label="Page break preview"><ViewIcon kind="break" /></IconButton>
        </ViewButtons>
        <ZoomArea>
          <ZoomLabel>100%</ZoomLabel>
          <IconButton $width={17} aria-label="Zoom out"><RoundIcon /></IconButton>
          <ZoomSlider type="range" aria-label="Zoom" min="0" max="100" defaultValue="50" />
          <IconButton $width={17} aria-label="Zoom in"><RoundIcon plus /></IconButton>
        </ZoomArea>
      </StatusBar>

      <Taskbar>
        <StartButton><FlagIcon />start</StartButton>
        <QuickLaunch>
          <IeIcon />
          <FirefoxIcon />
          <AppIcon letter="W" color="#2d59b5" />
          <AppIcon letter="X" color="#1f8a3b" />
          <KeyIcon />
          <AppIcon letter="P" color="#d2461e" />
          <DesktopIcon />
        </QuickLaunch>
        <Tasks>
          <Task><FirefoxIcon />BA 213 W11 (Pasc...</Task>
          <Task><AppIcon letter="P" color="#d2461e" />Microsoft PowerPo...</Task>
          <Task $hover>
            <AppIcon letter="W" color="#2d59b5" />Time_value_of_mo...
            <FadingTip>Time_value_of_money_Practice_problems-2009.doc (Read-Only) [Compatibility Mode]</FadingTip>
            <Pointer>
              <svg width="12" height="19" viewBox="0 0 12 19">
                <path d="M.5.5v15l4-4 3 6 2-1-3-6h5z" fill="#fff" stroke="#000" />
              </svg>
            </Pointer>
          </Task>
          <Task><FirefoxIcon />PV-PresentValueT...</Task>
          <Task $pressed><AppIcon letter="X" color="#1f8a3b" />Microsoft Excel - r...</Task>
        </Tasks>
        <LanguageBar>
          <svg width="14" height="14" viewBox="0 0 14 14">
            <path d="M.5.5h12v13H.5z" fill="#fff8d8" stroke="#222" />
            <text x="6.500" y="11" fontSize="11" fontWeight="bold" textAnchor="middle" fill="#111">?</text>
          </svg>
          <svg width="10" height="18" viewBox="0 0 10 18" fill="none" stroke="#fff">
            <path d="M3.500 1.500h5v3h-5zM.5 4.500h5v3h-5z" /><path d="M2 14h6l-3 3z" fill="#fff" stroke="none" />
          </svg>
        </LanguageBar>
        <Tray>
          <TrayIcons />
          <time>11:12 AM</time>
        </Tray>
      </Taskbar>
    </Window>
  </>
);

export default App;
